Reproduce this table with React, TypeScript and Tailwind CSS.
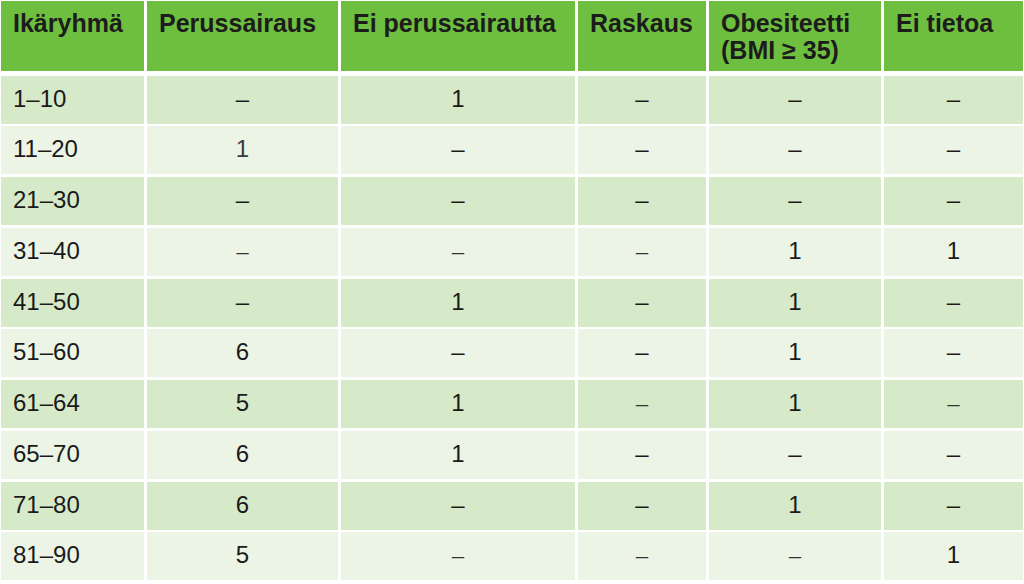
import React from "react";

type Cell = string | { t: string; thin?: boolean; light?: boolean };

const headers: React.ReactNode[] = [
  "Ikäryhmä",
  "Perussairaus",
  "Ei perussairautta",
  "Raskaus",
  <>
    Obesiteetti
    <br />
    (BMI ≥ 35)
  </>,
  "Ei tietoa",
];

const T = (t: string): Cell => ({ t, thin: true });

const rows: Cell[][] = [
  ["1–10", "–", "1", "–", "–", "–"],
  ["11–20", { t: "1", light: true }, "–", "–", "–", "–"],
  ["21–30", "–", "–", "–", "–", "–"],
  ["31–40", T("–"), T("–"), T("–"), "1", "1"],
  ["41–50", "–", "1", "–", "1", "–"],
  ["51–60", "6", "–", "–", "1", "–"],
  ["61–64", "5", "1", T("–"), "1", T("–")],
  ["65–70", "6", "1", "–", "–", "–"],
  ["71–80", "6", "–", "–", "1", "–"],
  ["81–90", "5", T("–"), T("–"), T("–"), "1"],
];

function renderCell(c: Cell) {
  if (typeof c === "string") return c;
  if (c.thin)
    return (
      <span style={{ fontFamily: '"Liberation Serif", serif' }} className="text-[#333]">
        {c.t}
      </span>
    );
  return <span className="text-[#3a3a3a]">{c.t}</span>;
}

export default function App() {
  return (
    <div
      className="w-[1024px] h-[584px] bg-white pt-[1px] pl-[1px] overflow-hidden text-[#1a1a1a]"
      style={{ fontFamily: '"Liberation Sans", Arial, sans-serif' }}
    >
      <div className="grid grid-cols-[143px_191px_234px_128px_172px_139px] gap-x-[3px]">
        {headers.map((h, i) => (
          <div
            key={i}
            className="h-[70px] bg-[#6ebf3f] pl-3 pt-[9px] text-[25px] leading-[27px] font-bold text-[#1c1c1c]"
          >
            {h}
          </div>
        ))}
      </div>
      <div className="mt-[4.5px] grid grid-cols-[143px_191px_234px_128px_172px_139px] gap-x-[3px] gap-y-[2.75px] auto-rows-[48px]">
        {rows.map((r, ri) =>
          r.map((c, ci) => (
            <div
              key={`${ri}-${ci}`}
              className={`${ri % 2 === 0 ? "bg-[#d6eac9]" : "bg-[#ebf4e5]"} ${
                ci === 0 ? "pl-3 text-left" : "text-center"
              } text-[24px] leading-[46px]`}
            >
              {renderCell(c)}
            </div>
          ))
        )}
      </div>
    </div>
  );
}
